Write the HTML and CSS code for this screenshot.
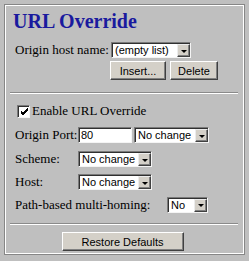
FILE: index.html
```html
<!DOCTYPE html>
<html>
<head>
<meta charset="utf-8">
<link rel="stylesheet" href="styles.css">
</head>
<body>
<div class="panel">
  <div class="inner">
    <h1 class="title">URL Override</h1>
    <div class="row row-host">
      <span class="lbl lbl-host">Origin host name:</span>
      <span class="sel sel-host"><span class="val">(empty list)</span><span class="arr"><i></i></span></span>
    </div>
    <div class="btnrow">
      <span class="btn btn-insert">Insert...</span>
      <span class="btn btn-delete">Delete</span>
    </div>
    <div class="hr"></div>
    <div class="chkrow">
      <span class="chk"><svg width="9" height="9" viewBox="0 0 9 9"><path d="M1 4 L3 6 L8 1 M1 5 L3 7 L8 2 M1 6 L3 8 L8 3" stroke="#000" stroke-width="1" fill="none"/></svg></span>
      <span class="chktxt">Enable URL Override</span>
    </div>
    <div class="row row-port">
      <span class="lbl lbl-w">Origin Port:</span>
      <span class="inp">80</span>
      <span class="sel sel-port"><span class="val">No change</span><span class="arr"><i></i></span></span>
    </div>
    <div class="row row-scheme">
      <span class="lbl lbl-w">Scheme:</span>
      <span class="sel sel-std"><span class="val">No change</span><span class="arr"><i></i></span></span>
    </div>
    <div class="row row-host2">
      <span class="lbl lbl-w">Host:</span>
      <span class="sel sel-std"><span class="val">No change</span><span class="arr"><i></i></span></span>
    </div>
    <div class="row row-path">
      <span class="lbl lbl-path">Path-based multi-homing:</span>
      <span class="sel sel-no"><span class="val">No</span><span class="arr"><i></i></span></span>
    </div>
    <div class="hr hr2"></div>
    <div class="foot">
      <span class="btn btn-restore">Restore Defaults</span>
    </div>
  </div>
</div>
</body>
</html>
```
FILE: styles.css
```css
html, body {
  margin: 0;
  padding: 0;
  background: #bfbfbf;
}
body {
  font-family: "Liberation Serif", "Times New Roman", serif;
  font-size: 13px;
  color: #000;
}
.panel {
  margin: 4px;
  width: 241px;
  height: 251px;
  box-sizing: border-box;
  border: 1px solid #868686;
}
.inner {
  height: 100%;
  box-sizing: border-box;
  border: 1px solid #ffffff;
  padding-top: 4px;
}
.title {
  margin: 0 0 0 7px;
  font-family: "Liberation Serif", "Times New Roman", serif;
  font-weight: bold;
  font-size: 20px;
  line-height: 22px;
  color: #1a1a9e;
}
.row {
  display: flex;
  align-items: center;
  padding-left: 9px;
  height: 16px;
}
.row-host { margin-top: 10px; }
.lbl { white-space: nowrap; line-height: 16px; }
.lbl-host { width: 96px; }
.lbl-w { width: 63px; }
.lbl-path { width: 152px; }

.sel {
  display: inline-flex;
  box-sizing: border-box;
  height: 16px;
  background: #fff;
  border-top: 1px solid #7a7a7a;
  border-left: 1px solid #7a7a7a;
  border-right: 1px solid #f4f4f4;
  border-bottom: 1px solid #f4f4f4;
  box-shadow: inset 1px 1px 0 #303030;
  font-family: "Liberation Sans", Arial, sans-serif;
  font-size: 11px;
  line-height: 14px;
}
.sel .val {
  flex: 1;
  padding-left: 3px;
  white-space: nowrap;
  overflow: hidden;
}
.arr {
  width: 13px;
  height: 13px;
  margin: 1px 0 0 0;
  box-sizing: border-box;
  background: #d4d0c8;
  border-top: 1px solid #ececec;
  border-left: 1px solid #ececec;
  border-right: 1px solid #404040;
  border-bottom: 1px solid #404040;
  box-shadow: inset -1px -1px 0 #808080;
  display: flex;
  align-items: center;
  justify-content: center;
}
.arr i {
  display: block;
  width: 0;
  height: 0;
  border-left: 3px solid transparent;
  border-right: 3px solid transparent;
  border-top: 3px solid #000;
  margin-top: 1px;
}
.sel-host { width: 80px; }
.sel-port { width: 75px; margin-left: 2px; }
.sel-std { width: 74px; }
.sel-no { width: 41px; }

.inp {
  display: inline-block;
  box-sizing: border-box;
  width: 54px;
  height: 16px;
  background: #fff;
  border-top: 1px solid #7a7a7a;
  border-left: 1px solid #7a7a7a;
  border-right: 1px solid #f4f4f4;
  border-bottom: 1px solid #f4f4f4;
  box-shadow: inset 1px 1px 0 #303030;
  font-family: "Liberation Sans", Arial, sans-serif;
  font-size: 11px;
  line-height: 14px;
  padding-left: 2px;
}

.btnrow {
  display: flex;
  gap: 4px;
  margin-top: 3px;
  padding-left: 104px;
}
.btn {
  display: inline-flex;
  align-items: center;
  justify-content: center;
  box-sizing: border-box;
  height: 19px;
  background: #d4d0c8;
  border-top: 1px solid #ffffff;
  border-left: 1px solid #ffffff;
  border-right: 1px solid #404040;
  border-bottom: 1px solid #404040;
  box-shadow: inset -1px -1px 0 #808080;
  font-family: "Liberation Sans", Arial, sans-serif;
  font-size: 11px;
  color: #000;
}
.btn-insert { width: 56px; }
.btn-delete { width: 48px; }
.btn-restore { width: 122px; }

.hr {
  margin: 12px 5px 0 4px;
  height: 1px;
  border-top: 1px solid #8a8a8a;
  background: #fff;
}
.chkrow {
  display: flex;
  align-items: center;
  margin-top: 9px;
  padding-left: 11px;
  height: 16px;
}
.chk {
  width: 13px;
  height: 13px;
  box-sizing: border-box;
  background: #fff;
  border-top: 1px solid #7a7a7a;
  border-left: 1px solid #7a7a7a;
  border-right: 1px solid #f4f4f4;
  border-bottom: 1px solid #f4f4f4;
  box-shadow: inset 1px 1px 0 #303030;
  display: flex;
  align-items: center;
  justify-content: center;
  margin-right: 2px;
}
.chk svg { display: block; margin: 1px 0 0 1px; }
.chktxt { line-height: 16px; }
.row-port { margin-top: 8px; }
.row-scheme { margin-top: 8px; }
.row-host2 { margin-top: 7px; }
.row-path { margin-top: 6px; height: 17px; }
.hr2 { margin-top: 10px; }
.foot {
  display: flex;
  justify-content: center;
  margin-top: 7px;
  padding-right: 4px;
}
```
